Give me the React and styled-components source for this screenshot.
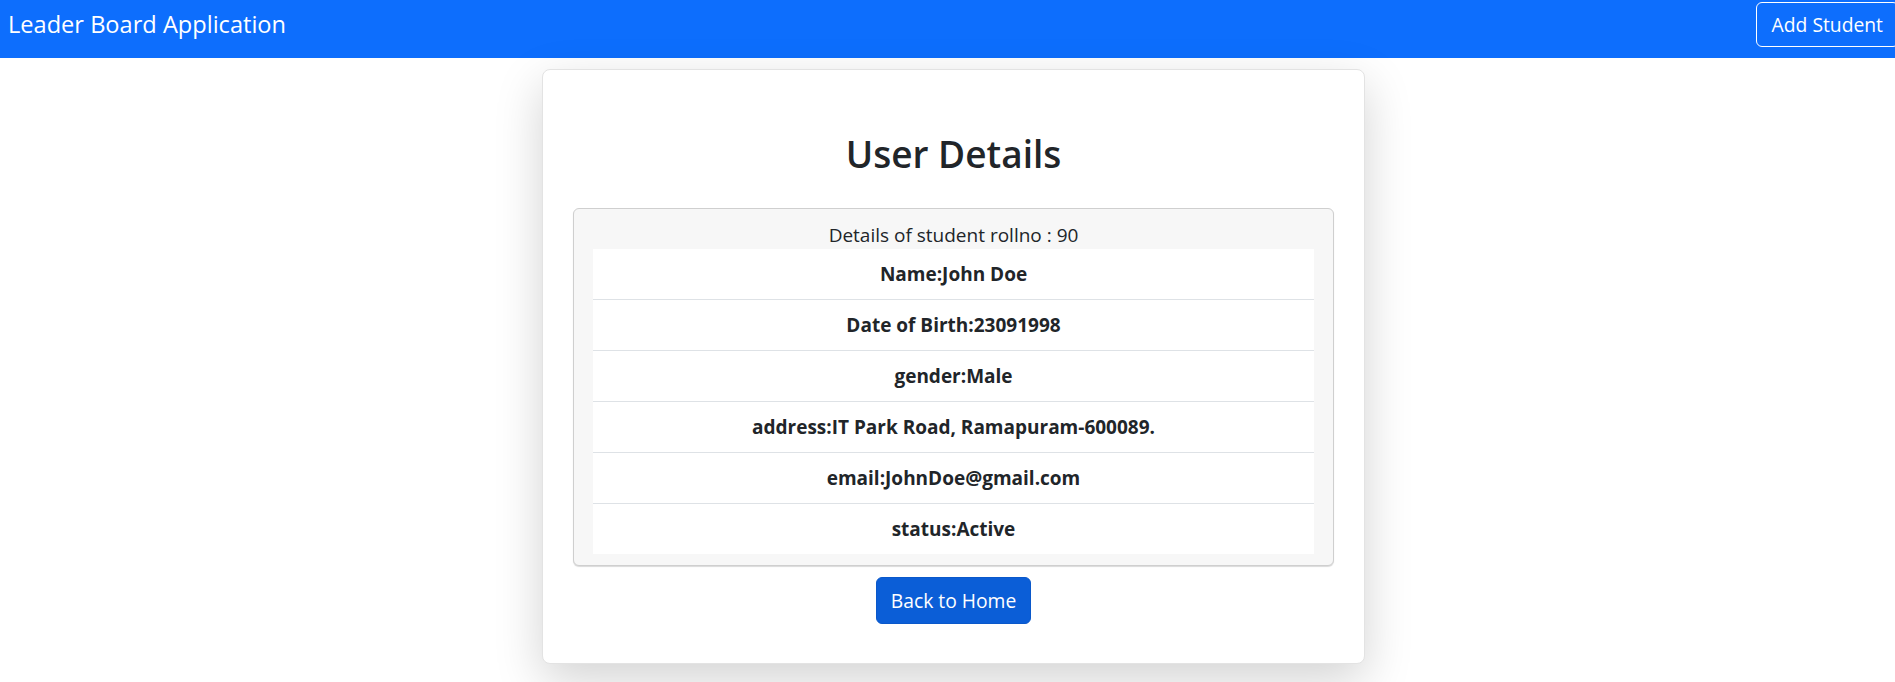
import React from "react";
import styled, { createGlobalStyle } from "styled-components";

const GlobalStyle = createGlobalStyle`
  body {
    margin: 0;
    padding: 0;
    background: #ffffff;
    font-family: "Open Sans", "Noto Sans", sans-serif;
    color: #212529;
  }
`;

const Navbar = styled.nav`
  display: flex;
  justify-content: space-between;
  align-items: flex-start;
  height: 58px;
  background: #0d6efd;
  padding: 2px 0 0 8px;
  box-sizing: border-box;
  overflow: hidden;
`;

const Brand = styled.span`
  color: #ffffff;
  font-size: 23.6px;
  line-height: 40px;
  margin-top: 2px;
`;

const OutlineButton = styled.button`
  font-family: inherit;
  font-size: 19.3px;
  color: #ffffff;
  background: transparent;
  border: 1px solid #ffffff;
  border-radius: 6px;
  height: 45px;
  padding: 0 15px;
  margin-right: -4px;
`;

const Page = styled.main`
  display: flex;
  justify-content: center;
  padding: 11px 0 30px 12px;
`;

const Card = styled.section`
  width: 823px;
  box-sizing: border-box;
  border: 1px solid #e3e3e3;
  border-radius: 8px;
  background: #ffffff;
  box-shadow: 0 16px 48px rgba(0, 0, 0, 0.175);
  padding: 32px 30px 39px;
  display: flex;
  flex-direction: column;
  align-items: center;
`;

const Title = styled.h1`
  margin: 28px 0 30px;
  font-size: 37px;
  line-height: 48px;
  font-weight: 600;
  color: #212529;
`;

const Panel = styled.div`
  align-self: stretch;
  background: #f7f7f7;
  border: 1px solid #cfcfcf;
  border-radius: 6px;
  box-shadow: 0 1px 1px rgba(0, 0, 0, 0.15);
  padding: 14px 19px 11px;
`;

const PanelHeader = styled.div`
  text-align: center;
  font-size: 19px;
  line-height: 24px;
  margin-bottom: 2px;
`;

const List = styled.ul`
  list-style: none;
  margin: 0;
  padding: 0;
  background: #ffffff;
`;

const Row = styled.li`
  text-align: center;
  font-weight: 700;
  font-size: 19px;
  line-height: 24px;
  padding: 13px 16px;
  border-bottom: 1px solid #dee2e6;

  &:last-child {
    border-bottom: none;
  }
`;

const PrimaryButton = styled.button`
  font-family: inherit;
  font-size: 19.3px;
  color: #ffffff;
  background: #0b5ed7;
  border: 1px solid #0a58ca;
  border-radius: 6px;
  height: 47px;
  padding: 0 14px;
  margin-top: 11px;
`;

const details = [
  "Name:John Doe",
  "Date of Birth:23091998",
  "gender:Male",
  "address:IT Park Road, Ramapuram-600089.",
  "email:JohnDoe@gmail.com",
  "status:Active",
];

export default function App() {
  return (
    <>
      <GlobalStyle />
      <Navbar>
        <Brand>Leader Board Application</Brand>
        <OutlineButton>Add Student</OutlineButton>
      </Navbar>
      <Page>
        <Card>
          <Title>User Details</Title>
          <Panel>
            <PanelHeader>Details of student rollno : 90</PanelHeader>
            <List>
              {details.map((d) => (
                <Row key={d}>{d}</Row>
              ))}
            </List>
          </Panel>
          <PrimaryButton>Back to Home</PrimaryButton>
        </Card>
      </Page>
    </>
  );
}
